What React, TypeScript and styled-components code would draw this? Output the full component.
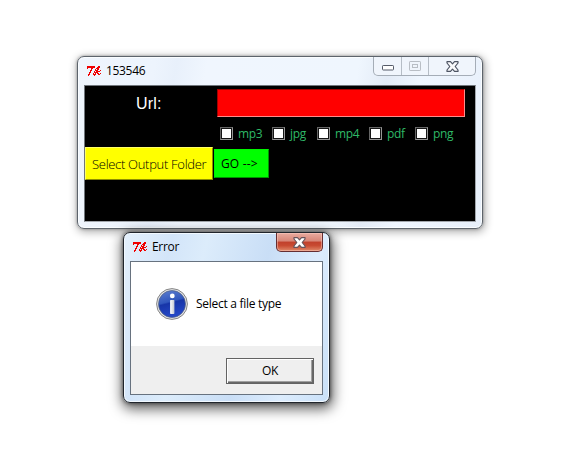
import React from "react";
import styled, { createGlobalStyle, css } from "styled-components";

const Global = createGlobalStyle`
  * { box-sizing: border-box; }
  html, body { margin: 0; background: #fff; }
  body { font-family: "Open Sans", "Noto Sans", sans-serif; font-size: 12px; color: #000; }
  button { font: inherit; padding: 0; margin: 0; border-radius: 0; color: #000; }
`;

const Desktop = styled.main`
  position: relative;
  width: 571px;
  height: 450px;
  overflow: hidden;
  background: #fff;
`;

const Window = styled.section<{ $active?: boolean }>`
  position: absolute;
  display: flex;
  flex-direction: column;
  border-radius: 7px;
  ${(p) =>
    p.$active
      ? css`
          left: 123px;
          top: 232px;
          width: 207px;
          height: 171px;
          padding: 0 6px 7px;
          border: 1px solid #20252c;
          background: linear-gradient(105deg, #e4f0fc 0, #d3e5f9 20%, #dcecfb 34%, #c9def6 60%, #dcecfd 80%, #c9e0f8 100%);
          box-shadow: inset 0 0 0 1px #f2f9ff, 0 0 4px rgba(0, 0, 0, 0.6), 1px 4px 13px 2px rgba(0, 0, 0, 0.62);
        `
      : css`
          left: 77px;
          top: 56px;
          width: 406px;
          height: 173px;
          padding: 0 6px 6px;
          border: 1px solid #5d646c;
          background: linear-gradient(100deg, #eff5fd 0, #edf4fd 18%, #e8f0fb 23%, #f0f6fe 30%, #eff6fe 65%, #e3ebf6 72%, #eff6ff 80%, #e7effa 100%);
          box-shadow: inset 0 0 0 1px #fafdff, 0 0 3px rgba(0, 0, 0, 0.35), 1px 2px 9px 1px rgba(0, 0, 0, 0.32);
        `}
`;

const TitleBar = styled.header`
  display: flex;
  flex: none;
  height: 28px;
  padding-left: 2px;
`;

const Title = styled.h1`
  flex: 1;
  margin: 0 0 0 4px;
  font-size: 12px;
  font-weight: 400;
  line-height: 27px;
  letter-spacing: -0.32px;
`;

const TkSvg = styled.svg`
  flex: none;
  width: 16px;
  height: 12px;
  margin-top: 8px;
`;

const Controls = styled.div`
  display: flex;
  height: 19px;
  width: 103px;
  border: 1px solid #a5adb7;
  border-top: 0;
  border-radius: 0 0 5px 5px;
  background: #f0f5fc;
`;

const Control = styled.button<{ $width: number; $drop?: number }>`
  display: grid;
  place-items: center;
  width: ${(p) => p.$width}px;
  height: 18px;
  padding-top: ${(p) => p.$drop ?? 0}px;
  border: 0;
  border-right: 1px solid #b6bdc6;
  background: transparent;
  &:last-child { border-right: 0; }
`;

const RedClose = styled.button`
  display: grid;
  place-items: center;
  width: 47px;
  height: 19px;
  border: 1px solid #652e31;
  border-top: 0;
  border-radius: 0 0 5px 5px;
  background: linear-gradient(#e9aba0 0, #d78677 45%, #c1402c 50%, #c84b32 70%, #e08a6b 100%);
  box-shadow: inset 0 0 0 1px rgba(255, 210, 200, 0.45);
`;

const Client = styled.div`
  flex: 1;
  min-height: 0;
  border: 1px solid #70767c;
  border-right-color: #a2a7ad;
  border-bottom-color: #a2a7ad;
  background: #000;
`;

const UrlRow = styled.label`
  display: flex;
  height: 41px;
  padding-top: 3px;
`;

const UrlLabel = styled.span`
  width: 132px;
  padding-left: 51px;
  color: #fff;
  font: 16px/30px "Liberation Sans", Arial, sans-serif;
  letter-spacing: 0.2px;
`;

const UrlInput = styled.input`
  width: 248px;
  height: 28px;
  padding: 0 4px;
  border: 1px solid #a40000;
  border-right-color: #ff8b8b;
  border-bottom-color: #ff8b8b;
  border-radius: 0;
  outline: 0;
  background: #f00;
`;

const TypeRow = styled.div`
  display: flex;
  height: 20px;
  padding-left: 135px;
`;

const TypeOption = styled.label<{ $width: number }>`
  display: flex;
  flex: none;
  width: ${(p) => p.$width}px;
  color: #2fb967;
  font-size: 12px;
  line-height: 13px;
  letter-spacing: -0.3px;
`;

const Check = styled.input`
  appearance: none;
  width: 13px;
  height: 13px;
  margin: 0 5px 0 0;
  border: 1px solid #666;
  border-right-color: #969696;
  border-bottom-color: #969696;
  background: #fff;
  box-shadow: inset 0 0 0 1px #151515;
`;

const ActionRow = styled.div`
  display: flex;
  align-items: center;
  gap: 1px;
  height: 33px;
`;

const Action = styled.button<{ $tone: "yellow" | "green" }>`
  border: 1px solid;
  text-align: left;
  white-space: nowrap;
  ${(p) =>
    p.$tone === "yellow"
      ? css`
          width: 128px;
          height: 33px;
          padding: 0 0 0 6px;
          border-color: #ffff66 #8f8f00 #8f8f00 #ffff66;
          background: #ff0;
          font-size: 13px;
          font-weight: 300;
          letter-spacing: -0.3px;
        `
      : css`
          width: 55px;
          height: 29px;
          padding-left: 6px;
          border-color: #00f400 #009500 #009500 #00f400;
          background: #0f0;
          font-size: 12px;
          letter-spacing: 0.15px;
        `}
`;

const DialogClient = styled.div`
  display: flex;
  flex: 1;
  flex-direction: column;
  border: 1px solid #67727f;
  background: #fff;
`;

const MessageArea = styled.div`
  display: flex;
  align-items: center;
  gap: 8px;
  height: 84px;
  padding-left: 25px;
`;

const Message = styled.p`
  margin: 0 0 2px;
  letter-spacing: -0.28px;
  white-space: nowrap;
`;

const Footer = styled.footer`
  display: flex;
  flex: 1;
  justify-content: flex-end;
  padding: 12px 8px 0 0;
  background: #efefef;
`;

const OkButton = styled.button`
  width: 88px;
  height: 26px;
  padding-bottom: 2px;
  border: 1px solid #636363;
  background: #efefef;
  box-shadow: inset 1px 1px #fff, inset -1px -1px #686868, inset -2px -2px #a0a0a0;
  letter-spacing: -0.4px;
`;

const TkIcon = () => (
  <TkSvg viewBox="0 0 16 12" fill="#f00000" shapeRendering="crispEdges" aria-hidden="true">
    <path d="M1 1H9V3H7V4H6V6H5V8H4V10H3V11H2V9H3V7H4V5H5V3H2V4H1Z" />
    <path d="M12 1H14V3H13V5H12V6H14V7H12V8H13V9H14V8H15V9H14V10H12V9H11V8H10V10H9V11H8V9H9V7H10V5H11V3H12Z" />
    <path d="M11 2H12V3H11ZM10 3H11V4H10ZM9 4H10V6H9ZM8 6H9V8H8ZM7 8H8V10H7ZM14 5H15V6H14Z" />
  </TkSvg>
);

const CloseGlyph = ({ outline, fill }: { outline: string; fill: string }) => (
  <svg width="13" height="11" viewBox="0 0 13 11" aria-hidden="true">
    <path
      d="M1 .6H4.5L6.5 2.8 8.5.6H12V2L9.2 5.5 12 9V10.4H8.5L6.5 8.2 4.5 10.4H1V9L3.8 5.5 1 2Z"
      fill={fill}
      stroke={outline}
      strokeWidth="1.2"
      strokeLinejoin="round"
    />
  </svg>
);

const InfoIcon = () => (
  <svg width="32" height="32" viewBox="0 0 32 32" aria-hidden="true">
    <defs>
      <linearGradient id="infoBlue" x1="0" y1="0" x2=".25" y2="1">
        <stop offset="0" stopColor="#5f80d0" />
        <stop offset=".48" stopColor="#3157bd" />
        <stop offset=".54" stopColor="#1735a8" />
        <stop offset="1" stopColor="#2447c6" />
      </linearGradient>
      <linearGradient id="infoLetter" x1="0" y1="0" x2="1" y2="0">
        <stop offset="0" stopColor="#fff" />
        <stop offset="1" stopColor="#c3c8d2" />
      </linearGradient>
    </defs>
    <circle cx="16" cy="16" r="15.4" fill="#e3e4e6" stroke="#868686" />
    <circle cx="16" cy="16" r="13.5" fill="url(#infoBlue)" stroke="#53627f" strokeWidth=".7" />
    <circle cx="16.3" cy="7.9" r="2.4" fill="#fff" />
    <rect x="14.1" y="12" width="4.3" height="14" rx=".7" fill="url(#infoLetter)" />
  </svg>
);

const fileTypes = [
  { name: "mp3", width: 52 },
  { name: "jpg", width: 45 },
  { name: "mp4", width: 52 },
  { name: "pdf", width: 46 },
  { name: "png", width: 50 },
];

export default function App() {
  return (
    <>
      <Global />
      <Desktop>
        <Window>
          <TitleBar>
            <TkIcon />
            <Title>153546</Title>
            <Controls>
              <Control $width={28} $drop={4} aria-label="Minimize">
                <svg width="13" height="6" viewBox="0 0 13 6">
                  <rect x="1.5" y=".5" width="11" height="4.5" rx=".7" fill="#fff" stroke="#555b68" />
                </svg>
              </Control>
              <Control $width={27} aria-label="Maximize" disabled>
                <svg width="12" height="10" viewBox="0 0 12 10" fill="none" stroke="#b9bec5">
                  <rect x=".5" y=".5" width="11" height="9" rx=".6" />
                  <rect x="3.5" y="3.5" width="5" height="3" />
                </svg>
              </Control>
              <Control $width={46} aria-label="Close">
                <CloseGlyph outline="#4d5463" fill="#f8f9fb" />
              </Control>
            </Controls>
          </TitleBar>
          <Client>
            <UrlRow>
              <UrlLabel>Url:</UrlLabel>
              <UrlInput />
            </UrlRow>
            <TypeRow>
              {fileTypes.map((type) => (
                <TypeOption key={type.name} $width={type.width}>
                  <Check type="checkbox" />
                  {type.name}
                </TypeOption>
              ))}
            </TypeRow>
            <ActionRow>
              <Action $tone="yellow">Select Output Folder</Action>
              <Action $tone="green">GO --&gt;</Action>
            </ActionRow>
          </Client>
        </Window>
        <Window $active>
          <TitleBar>
            <TkIcon />
            <Title>Error</Title>
            <RedClose aria-label="Close">
              <CloseGlyph outline="#67545b" fill="#fff" />
            </RedClose>
          </TitleBar>
          <DialogClient>
            <MessageArea>
              <InfoIcon />
              <Message>Select a file type</Message>
            </MessageArea>
            <Footer>
              <OkButton>OK</OkButton>
            </Footer>
          </DialogClient>
        </Window>
      </Desktop>
    </>
  );
}
